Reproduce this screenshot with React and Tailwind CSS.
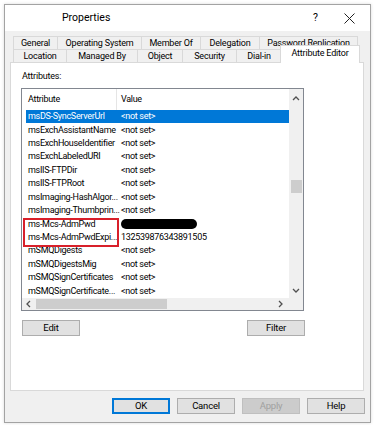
import React from "react";

const font = { fontFamily: "Roboto, 'Liberation Sans', Arial, sans-serif" };

const rowsData = [
  ["msDS-SyncServerUrl", "<not set>"],
  ["msExchAssistantName", "<not set>"],
  ["msExchHouseIdentifier", "<not set>"],
  ["msExchLabeledURI", "<not set>"],
  ["msIIS-FTPDir", "<not set>"],
  ["msIIS-FTPRoot", "<not set>"],
  ["msImaging-HashAlgor...", "<not set>"],
  ["msImaging-Thumbprin...", "<not set>"],
  ["ms-Mcs-AdmPwd", null],
  ["ms-Mcs-AdmPwdExpi...", "132539876343891505"],
  ["mSMQDigests", "<not set>"],
  ["mSMQDigestsMig", "<not set>"],
  ["mSMQSignCertificates", "<not set>"],
  ["mSMQSignCertificate...", "<not set>"],
];

const tabsTop = [
  ["General", 45],
  ["Operating System", 85],
  ["Member Of", 60],
  ["Delegation", 60],
  ["Password Replication", 99],
];

const tabsBottom = [
  ["Location", 54],
  ["Managed By", 72],
  ["Object", 46],
  ["Security", 55],
  ["Dial-in", 46],
];

// small chevron used by the scrollbars
function Chevron({ dir }) {
  const pts = {
    up: "1,5 4,2 7,5",
    down: "1,2 4,5 7,2",
    left: "5,1 2,4 5,7",
    right: "2,1 5,4 2,7",
  }[dir];
  return (
    <svg width="8" height="8" viewBox="0 0 8 8">
      <polyline points={pts} fill="none" stroke="#505050" strokeWidth="1.3" />
    </svg>
  );
}

function Button({ children, disabled, focused }) {
  return (
    <div
      className={`h-[16px] w-[58px] flex items-center justify-center text-[9.5px] tracking-[-0.2px] ${
        disabled
          ? "border border-[#bfbfbf] bg-[#cccccc] text-[#a0a0a0]"
          : focused
          ? "border-2 border-[#0078d7] bg-[#e1e1e1] text-black"
          : "border border-[#adadad] bg-[#e1e1e1] text-black"
      }`}
    >
      {children}
    </div>
  );
}

export default function App() {
  return (
    <div className="w-[376px] h-[425px] bg-white pt-[4px] pl-[4px]" style={font}>
      <div className="w-[367px] h-[419px] border border-[#a3a3a3] bg-[#f0f0f0] flex flex-col shadow-[0_0_3px_rgba(0,0,0,0.15)]">
        {/* Title bar */}
        <div className="h-[26px] bg-white flex items-center text-[10.5px] text-black">
          <span className="ml-[57px]">Properties</span>
          <span className="ml-auto mr-[26px]">?</span>
          <svg width="11" height="11" viewBox="0 0 11 11" className="mr-[15px]">
            <path d="M0.5 0.5L10.5 10.5M10.5 0.5L0.5 10.5" stroke="#222" strokeWidth="1" />
          </svg>
        </div>

        {/* Tabs */}
        <div className="mt-[5px] text-[9px] tracking-[-0.2px] text-black">
          <div className="flex h-[13px] ml-[8px]">
            {tabsTop.map(([t, w]) => (
              <div
                key={t}
                style={{ width: w }}
                className="h-[13px] border-t border-l border-r border-[#d9d9d9] bg-[#f0f0f0] flex items-center justify-center leading-none -mr-[1px] whitespace-nowrap"
              >
                {t}
              </div>
            ))}
          </div>
          <div className="flex items-end h-[13px] ml-[8px]">
            {tabsBottom.map(([t, w]) => (
              <div
                key={t}
                style={{ width: w }}
                className="h-[13px] border-t border-l border-r border-[#d9d9d9] bg-[#f0f0f0] flex items-center justify-center leading-none -mr-[1px] whitespace-nowrap"
              >
                {t}
              </div>
            ))}
            <div className="relative top-[1px] z-10 h-[18px] w-[80px] -ml-[1px] border-t border-l border-r border-[#d9d9d9] bg-white flex items-start justify-center pt-[3px] leading-none whitespace-nowrap">
              Attribute Editor
            </div>
          </div>
        </div>

        {/* Panel */}
        <div className="ml-[5px] w-[354px] h-[329px] border border-[#d9d9d9] bg-white flex flex-col">
          <div className="mt-[7px] ml-[11px] h-[12px] leading-[12px] text-[9px] tracking-[-0.2px] text-black">Attributes:</div>

          {/* List view */}
          <div className="relative mt-[6px] ml-[10px] w-[283px] h-[223px] border border-[#828790] flex flex-col text-[9px] tracking-[-0.3px] text-black">
            <div className="flex flex-1">
              <div className="flex-1 flex flex-col">
                <div className="h-[21px] flex items-center">
                  <div className="w-[95px] h-full flex items-center pl-[6px] border-r border-[#e5e5e5]">Attribute</div>
                  <div className="pl-[4px]">Value</div>
                </div>
                {rowsData.map(([a, v], i) => (
                  <div
                    key={a}
                    className={`h-[13.43px] ml-[4px] flex items-center leading-none ${i === 0 ? "bg-[#0078d7] text-white" : ""}`}
                  >
                    <div className="w-[93px] pl-[2px] whitespace-nowrap">{a}</div>
                    <div className="pl-[2px] whitespace-nowrap">
                      {v === null ? (
                        <div className="w-[76px] h-[10px] rounded-full bg-black" />
                      ) : (
                        v
                      )}
                    </div>
                  </div>
                ))}
              </div>
              {/* vertical scrollbar */}
              <div className="w-[14px] bg-[#f0f0f0] flex flex-col items-center">
                <div className="h-[18px] flex items-center justify-center pt-[1px]">
                  <Chevron dir="up" />
                </div>
                <div className="mt-[73px] w-[11px] h-[13px] bg-[#cdcdcd]" />
                <div className="mt-auto h-[14px] flex items-center justify-center">
                  <Chevron dir="down" />
                </div>
              </div>
            </div>
            {/* horizontal scrollbar */}
            <div className="h-[12px] flex">
              <div className="flex-1 bg-[#f0f0f0] flex items-center">
                <div className="w-[14px] flex justify-center">
                  <Chevron dir="left" />
                </div>
                <div className="w-[131px] h-[10px] bg-[#cdcdcd]" />
                <div className="ml-auto w-[14px] flex justify-center mr-[1px]">
                  <Chevron dir="right" />
                </div>
              </div>
              <div className="w-[14px] bg-[#f0f0f0]" />
            </div>

            {/* red highlight */}
            <div className="absolute left-[1px] top-[129px] w-[96px] h-[29px] border-2 border-[#d8202a]" />
          </div>

          <div className="mt-[9px] ml-[11px] w-[283px] flex justify-between">
            <Button>Edit</Button>
            <Button>Filter</Button>
          </div>
        </div>

        {/* Dialog buttons */}
        <div className="mt-[7px] flex justify-end gap-[7px] mr-[5px]">
          <Button focused>OK</Button>
          <Button>Cancel</Button>
          <Button disabled>Apply</Button>
          <Button>Help</Button>
        </div>
      </div>
    </div>
  );
}
